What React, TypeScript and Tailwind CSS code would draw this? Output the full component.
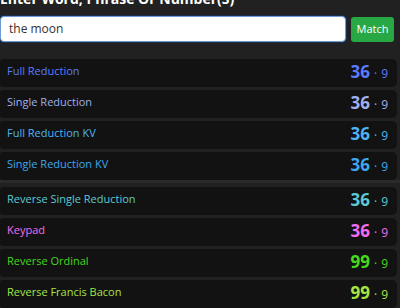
const rows = [
  { name: "Full Reduction", value: 36, root: 9, color: "text-[#5b7bff]" },
  { name: "Single Reduction", value: 36, root: 9, color: "text-[#9fb0ec]" },
  { name: "Full Reduction KV", value: 36, root: 9, color: "text-[#4cb4f4]" },
  { name: "Single Reduction KV", value: 36, root: 9, color: "text-[#3ea6ee]" },
];

const rows2 = [
  { name: "Reverse Single Reduction", value: 36, root: 9, color: "text-[#5ccad4]" },
  { name: "Keypad", value: 36, root: 9, color: "text-[#f26cf4]" },
  { name: "Reverse Ordinal", value: 99, root: 9, color: "text-[#45d81e]" },
  { name: "Reverse Francis Bacon", value: 99, root: 9, color: "text-[#a6e446]" },
];

type Row = (typeof rows)[number];

function CipherRow({ row }: { row: Row }) {
  return (
    <div className="flex items-center justify-between h-[28px] pb-[3px] bg-[#121212] rounded-r-[5px] rounded-l-[3px] pl-[7px] pr-[9px]">
      <span className={`text-[11px] ${row.color}`}>{row.name}</span>
      <span className={`flex items-baseline gap-[4px] ${row.color}`}>
        <span className="text-[17px] font-bold leading-none">{row.value}</span>
        <span className="text-[12px] leading-none">·</span>
        <span className="text-[12px] leading-none">{row.root}</span>
      </span>
    </div>
  );
}

export default function App() {
  return (
    <div
      className="w-[400px] h-[308px] overflow-hidden bg-[#212121]"
      style={{ fontFamily: '"Open Sans", "Noto Sans", sans-serif' }}
    >
      <h2 className="-mt-[9px] text-[14px] leading-[16px] font-bold text-white">
        Enter Word, Phrase Or Number(S)
      </h2>

      {/* search */}
      <div className="flex items-start gap-[5px] mt-[9px]">
        <div className="w-[346px] h-[26px] flex items-center bg-white border border-[#6e9ad6] rounded-[4px] shadow-[0_0_0_1px_#1b2f4d] pl-[8px] text-[12px] text-[#333]">
          the moon
        </div>
        <button className="mt-[1px] w-[43px] h-[25px] bg-[#28a745] rounded-[3px] text-[11px] text-white">
          Match
        </button>
      </div>

      {/* results */}
      <div className="mt-[17px] pr-[3px] flex flex-col gap-[3px]">
        {rows.map((r) => (
          <CipherRow key={r.name} row={r} />
        ))}
      </div>
      <div className="h-[7px] border-t-[3px] border-[#2a2a2a]" />
      <div className="pr-[3px] flex flex-col gap-[3px]">
        {rows2.map((r) => (
          <CipherRow key={r.name} row={r} />
        ))}
      </div>
    </div>
  );
}
